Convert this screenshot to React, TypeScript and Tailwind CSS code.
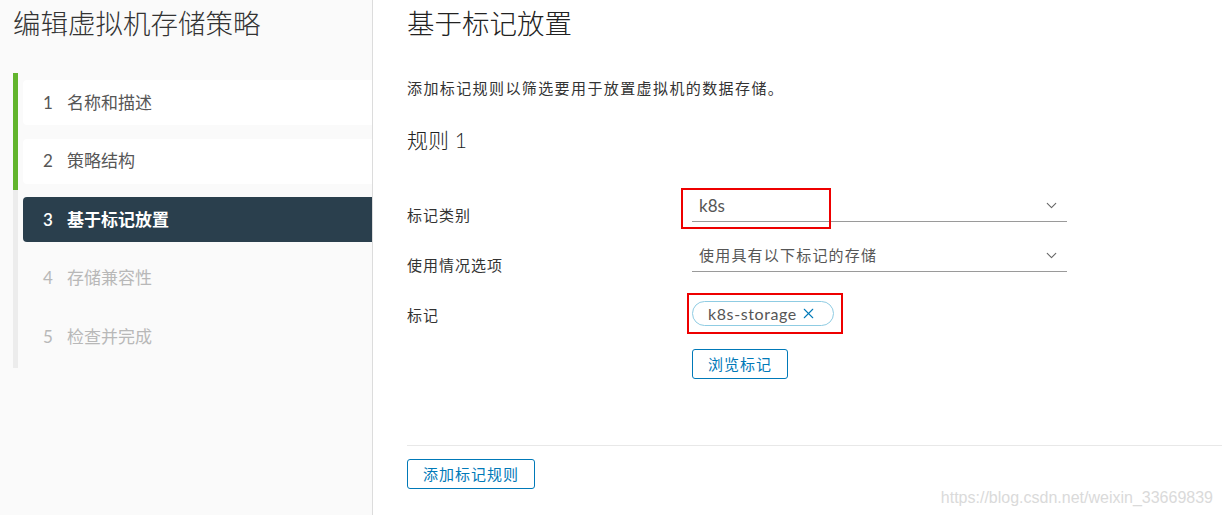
import { ChevronDown, X } from "lucide-react";

type Step = {
  num: number;
  label: string;
  state: "done" | "active" | "todo";
};

const steps: Step[] = [
  { num: 1, label: "名称和描述", state: "done" },
  { num: 2, label: "策略结构", state: "done" },
  { num: 3, label: "基于标记放置", state: "active" },
  { num: 4, label: "存储兼容性", state: "todo" },
  { num: 5, label: "检查并完成", state: "todo" },
];

function StepItem({ step }: { step: Step }) {
  const box =
    step.state === "done"
      ? "bg-white text-[#565656]"
      : step.state === "active"
        ? "bg-[#2a3f4d] text-white font-semibold"
        : "text-[#b8b8b8]";
  return (
    <div
      className={`flex h-[45px] items-center rounded-l-[4px] pl-[20px] text-[17px] ${box}`}
    >
      <span className="w-[24px]">{step.num}</span>
      <span>{step.label}</span>
    </div>
  );
}

export default function App() {
  return (
    <div className="relative flex h-[515px] w-[1222px] overflow-hidden bg-white font-['Lato','Noto_Sans_CJK_SC',sans-serif] text-[#333]">
      {/* ======= Sidebar ======= */}
      <aside className="flex w-[373px] shrink-0 flex-col border-r border-[#dcdcdc] bg-[#fafafa]">
        <h1 className="mt-[8px] pl-[13px] text-[27.5px] font-light leading-[32px] text-[#333]">
          编辑虚拟机存储策略
        </h1>
        <div className="mt-[33px] flex">
          <div className="ml-[13px] flex w-[5px] flex-col">
            <div className="h-[117px] bg-[#62b52d]" />
            <div className="flex-1 bg-[#ececec]" />
          </div>
          <div className="ml-[5px] flex flex-1 flex-col gap-[13.5px] pb-[9px] pt-[7px]">
            {steps.map((s) => (
              <StepItem key={s.num} step={s} />
            ))}
          </div>
        </div>
      </aside>

      {/* ======= Conteúdo ======= */}
      <main className="flex flex-1 flex-col pl-[34px]">
        <h2 className="mt-[8px] text-[27.5px] font-light leading-[32px] text-[#222]">
          基于标记放置
        </h2>
        <p className="mt-[36px] text-[15px] leading-[24px] tracking-[1.4px] text-[#333]">
          添加标记规则以筛选要用于放置虚拟机的数据存储。
        </p>
        <h3 className="mt-[25px] text-[21px] font-light leading-[30px] text-[#222]">
          规则 1
        </h3>

        <div className="mt-[35px] grid grid-cols-[285px_375px] text-[15px]">
          <div className="flex h-[50px] items-center tracking-[1px]">
            标记类别
          </div>
          <div className="relative">
            <div className="flex h-[32px] items-center justify-between border-b border-[#9a9a9a] pl-[7px] pr-[7px] text-[#565656]">
              <span className="text-[17px]">k8s</span>
              <ChevronDown size={17} strokeWidth={1.5} className="text-[#666]" />
            </div>
            <div className="absolute -left-[11px] -top-[2px] h-[41px] w-[150px] border-2 border-[#ee0000]" />
          </div>

          <div className="flex h-[50px] items-center tracking-[1px]">
            使用情况选项
          </div>
          <div>
            <div className="flex h-[32px] items-center justify-between border-b border-[#9a9a9a] pl-[7px] pr-[7px] tracking-[1.2px] text-[#565656]">
              <span>使用具有以下标记的存储</span>
              <ChevronDown size={17} strokeWidth={1.5} className="text-[#666]" />
            </div>
          </div>

          <div className="flex h-[50px] items-center tracking-[1px]">标记</div>
          <div className="relative flex flex-col items-start">
            <div className="mt-[11px] flex h-[25px] w-[142px] items-center gap-[3px] rounded-full border border-[#8fcce3] pl-[15px] text-[#565656]">
              <span className="text-[16px] tracking-[0.6px]">k8s-storage</span>
              <X size={17} strokeWidth={1.5} className="text-[#0079b8]" />
            </div>
            <div className="absolute -left-[5px] top-[3px] h-[41px] w-[156px] border-2 border-[#ee0000]" />
            <button className="mt-[23px] h-[30px] w-[96px] rounded-[3px] border border-[#0079b8] text-[15px] tracking-[1px] text-[#0079b8]">
              浏览标记
            </button>
          </div>
        </div>

        <div className="mt-[66px] border-t border-[#e8e8e8]" />
        <div className="mt-[13px]">
          <button className="h-[30px] w-[128px] rounded-[3px] border border-[#0079b8] text-[15px] tracking-[1px] text-[#0079b8]">
            添加标记规则
          </button>
        </div>
      </main>

      <span className="absolute right-[9px] top-[486px] font-['Liberation_Sans',Arial,sans-serif] text-[16px] text-[#dadada]">
        https://blog.csdn.net/weixin_33669839
      </span>
    </div>
  );
}
